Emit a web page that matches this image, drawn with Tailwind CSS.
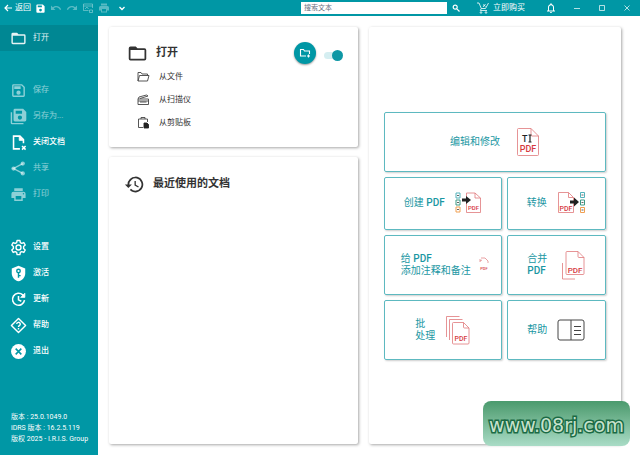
<!DOCTYPE html>
<html lang="zh-CN">
<head>
  <meta charset="UTF-8">
  <meta name="viewport" content="width=device-width, initial-scale=1.0">
  <title>打开</title>
  <script src="https://cdn.jsdelivr.net/npm/@tailwindcss/browser@4"></script>
</head>
<body class="min-h-screen flex flex-col bg-white text-[8px] text-[#333] font-['Roboto','Noto_Sans_CJK_SC',sans-serif]">

  <!-- Title bar -->
  <header class="h-4 shrink-0 flex items-center bg-[#0097a5] text-white">
    <div class="flex-1 flex items-center pl-1">
      <button class="flex items-center gap-[3px] leading-4">
        <svg class="w-2 h-2" viewBox="0 0 8 8" fill="none" stroke="currentColor" stroke-width="1.2"><path d="M8 4H1M4 1L1 4l3 3"/></svg>
        返回
      </button>
      <button class="ml-1" aria-label="保存">
        <svg class="w-[11px] h-[11px]" viewBox="0 0 24 24" fill="currentColor"><path d="M17 3H5a2 2 0 0 0-2 2v14a2 2 0 0 0 2 2h14a2 2 0 0 0 2-2V7zM12 18.500a3 3 0 1 1 0-6 3 3 0 0 1 0 6zM15 9H6V5.500h9z"/></svg>
      </button>
      <button class="ml-1 text-white/35" disabled aria-label="撤销">
        <svg class="w-3 h-3" viewBox="0 0 24 24" fill="currentColor"><path d="M12.5 8c-2.600 0-5 1-6.900 2.600L2 7v9h9l-3.600-3.600A8 8 0 0 1 20 16l2.400-.8A10.500 10.500 0 0 0 12.500 8z"/></svg>
      </button>
      <button class="ml-1 text-white/35" disabled aria-label="重做">
        <svg class="w-3 h-3" viewBox="0 0 24 24" fill="currentColor"><path d="M11.500 8c2.600 0 5 1 6.900 2.600L22 7v9h-9l3.600-3.600A8 8 0 0 0 4 16l-2.400-.8A10.500 10.500 0 0 1 11.500 8z"/></svg>
      </button>
      <button class="ml-1 text-white/35" disabled aria-label="图像">
        <svg class="w-3 h-3" viewBox="0 0 24 24" fill="none" stroke="currentColor" stroke-width="2"><path d="M13 17H3V4h18v8M3 8h18M6 14l4-4 3 4M15 16h6v5h-6z"/></svg>
      </button>
      <button class="ml-1 text-white/35" disabled aria-label="打印">
        <svg class="w-3 h-3" viewBox="0 0 24 24" fill="currentColor"><path d="M19 8H5a3 3 0 0 0-3 3v6h4v4h12v-4h4v-6a3 3 0 0 0-3-3zm-3 11H8v-5h8zM18 3H6v4h12z"/></svg>
      </button>
      <button class="ml-2" aria-label="更多">
        <svg class="w-2 h-2" viewBox="0 0 8 8" fill="none" stroke="currentColor" stroke-width="1.300"><path d="M1.500 3L4 5.500 6.500 3"/></svg>
      </button>
    </div>
    <input type="text" aria-label="搜索文本" placeholder="搜索文本" class="w-[146px] h-3 bg-white px-[3px] text-[7px] leading-3 text-gray-700 placeholder:text-gray-500">
    <div class="w-[193px] flex items-center pl-[5px]">
      <button aria-label="搜索">
        <svg class="w-2 h-2" viewBox="0 0 8 8" fill="none" stroke="currentColor" stroke-width="1.200"><circle cx="3.200" cy="3.200" r="2"/><path d="M4.800 4.800L7.500 7.500"/></svg>
      </button>
      <button class="ml-[17px] flex items-center gap-1 leading-4">
        <svg class="w-3 h-3" viewBox="0 0 12 12" fill="none" stroke="currentColor" stroke-width=".8"><path d="M0 1h2l2.300 5.500-1 2H10M4.300 6.500h4.200l3-5.500M6 2.500l2.500 2M8.500 2L6 5"/><circle cx="4" cy="10.500" r=".8"/><circle cx="9" cy="10.500" r=".8"/></svg>
        立即购买
      </button>
      <button class="ml-5" aria-label="通知">
        <svg class="w-3 h-3" viewBox="0 0 24 24" fill="currentColor"><path d="M12 22a2 2 0 0 0 2-2h-4c0 1.100.9 2 2 2zm6-6v-5c0-3.100-1.600-5.600-4.500-6.300V4a1.500 1.500 0 0 0-3 0v.7C7.600 5.400 6 7.900 6 11v5l-2 2v1h16v-1zm-2 1H8v-6c0-2.500 1.500-4.500 4-4.500s4 2 4 4.500z"/></svg>
      </button>
      <button class="ml-4" aria-label="最小化">
        <svg class="w-2 h-2" viewBox="0 0 8 8" stroke="currentColor" stroke-width=".7"><path d="M1 4.500h6"/></svg>
      </button>
      <button class="ml-[17px]" aria-label="最大化">
        <svg class="w-2 h-2" viewBox="0 0 8 8" fill="none" stroke="currentColor" stroke-width=".7"><path d="M1.500 1.500h5v5h-5z"/></svg>
      </button>
      <button class="ml-[17px]" aria-label="关闭">
        <svg class="w-2 h-2" viewBox="0 0 8 8" stroke="currentColor" stroke-width=".7"><path d="M1.500 1.500l5 5M6.500 1.500l-5 5"/></svg>
      </button>
    </div>
  </header>

  <div class="flex-1 flex">
    <!-- Sidebar -->
    <aside class="w-[98px] shrink-0 flex flex-col bg-[#0097a5] text-white pt-[9px] pb-[10px]">
      <nav class="flex flex-col">
        <button class="h-[26px] flex items-center gap-[6px] pl-[10px] bg-[#008793] text-white/90">
          <svg class="w-[17px] h-[17px]" viewBox="0 0 24 24" fill="currentColor"><path d="M20 6h-8l-2-2H4a2 2 0 0 0-2 2v12a2 2 0 0 0 2 2h16a2 2 0 0 0 2-2V8a2 2 0 0 0-2-2zm0 12H4V8h16z"/></svg>
          打开
        </button>

        <button disabled class="mt-[26px] h-[26px] flex items-center gap-[6px] pl-[10px] text-white/55">
          <svg class="w-[17px] h-[17px]" viewBox="0 0 24 24" fill="currentColor"><path d="M17 3H5a2 2 0 0 0-2 2v14a2 2 0 0 0 2 2h14a2 2 0 0 0 2-2V7zm2 16H5V5h11.200L19 7.800zM12 12a3 3 0 1 0 0 6 3 3 0 0 0 0-6zM6 6h9v4H6z"/></svg>
          保存
        </button>
        <button disabled class="h-[26px] flex items-center gap-[6px] pl-[10px] text-white/55">
          <svg class="w-[17px] h-[17px]" viewBox="0 0 24 24" fill="currentColor"><path d="M18.500 1H7a2 2 0 0 0-2 2v14a2 2 0 0 0 2 2h14a2 2 0 0 0 2-2V5.500zM14 16.500a3 3 0 1 1 0-6 3 3 0 0 1 0 6zM17 8H8V4h9z"/><path d="M1 6h2v15h16v2H3a2 2 0 0 1-2-2z"/></svg>
          另存为...
        </button>
        <button class="h-[26px] flex items-center gap-[6px] pl-[10px] font-medium">
          <svg class="w-[17px] h-[17px]" viewBox="0 0 24 24" fill="none" stroke="currentColor" stroke-width="2.200"><path d="M14 21H5V3h9l5 5v5"/><path d="M13 3v6h6z" fill="currentColor" stroke-width="1"/><path d="M17 17l5 5M22 17l-5 5"/></svg>
          关闭文档
        </button>
        <button disabled class="h-[26px] flex items-center gap-[6px] pl-[10px] text-white/55">
          <svg class="w-[17px] h-[17px]" viewBox="0 0 24 24" fill="currentColor"><circle cx="18" cy="5" r="3"/><circle cx="5" cy="12" r="3"/><circle cx="18" cy="19" r="3"/><path d="M18 5L5 12l13 7" fill="none" stroke="currentColor" stroke-width="2"/></svg>
          共享
        </button>
        <button disabled class="h-[26px] flex items-center gap-[6px] pl-[10px] text-white/55">
          <svg class="w-[17px] h-[17px]" viewBox="0 0 24 24" fill="currentColor"><path d="M19 8H5a3 3 0 0 0-3 3v6h4v4h12v-4h4v-6a3 3 0 0 0-3-3zm-3 11H8v-5h8zm3-7a1 1 0 1 1 0-2 1 1 0 0 1 0 2zM18 3H6v4h12z"/></svg>
          打印
        </button>

        <button class="mt-[27px] h-[26px] flex items-center gap-[6px] pl-[10px] font-medium">
          <svg class="w-[17px] h-[17px]" viewBox="0 0 24 24" fill="none" stroke="currentColor" stroke-width="2" stroke-linejoin="round"><path d="M10 2h4l.6 3 2 1.200L19.500 5l2 3.500-2.300 2v3l2.300 2-2 3.500-2.900-1.200-2 1.200-.6 3h-4l-.6-3-2-1.200L4.500 19l-2-3.500 2.300-2v-3l-2.300-2L4.500 5l2.900 1.200 2-1.200z"/><circle cx="12" cy="12" r="3.500"/></svg>
          设置
        </button>
        <button class="h-[26px] flex items-center gap-[6px] pl-[10px] font-medium">
          <svg class="w-[17px] h-[17px]" viewBox="0 0 24 24" fill="currentColor"><path d="M12 1L2.500 5v6.500c0 5.500 4 10 9.500 11.500 5.500-1.500 9.500-6 9.500-11.500V5z"/><g fill="none" stroke="#0097a5" stroke-width="2"><circle cx="12" cy="8.500" r="2.500"/><path d="M12 11v7M12 15h3"/></g></svg>
          激活
        </button>
        <button class="h-[26px] flex items-center gap-[6px] pl-[10px] font-medium">
          <svg class="w-[17px] h-[17px]" viewBox="0 0 24 24" fill="none" stroke="currentColor" stroke-width="2.200"><path d="M20.500 13a8.500 8.500 0 1 1-2.500-7.500L20 8M12 7v5.500l4 2"/><path d="M21 3v6h-6z" fill="currentColor" stroke-width="1"/></svg>
          更新
        </button>
        <button class="h-[26px] flex items-center gap-[6px] pl-[10px] font-medium">
          <svg class="w-[17px] h-[17px]" viewBox="0 0 24 24" fill="none" stroke="currentColor" stroke-width="2" stroke-linejoin="round"><path d="M12 2l10 10-10 10L2 12z"/><path d="M9.500 10a2.500 2.500 0 1 1 3.700 2.200c-.8.500-1.200.9-1.200 1.800M12 15.500v2"/></svg>
          帮助
        </button>
        <button class="h-[26px] flex items-center gap-[6px] pl-[10px] font-medium">
          <svg class="w-[17px] h-[17px]" viewBox="0 0 24 24"><circle cx="12" cy="12" r="10.500" fill="currentColor"/><path d="M8 8l8 8M16 8l-8 8" stroke="#0097a5" stroke-width="2.200"/></svg>
          退出
        </button>
      </nav>
      <div class="mt-auto pl-[11px] text-[7px] leading-[11px]">
        <p>版本 : 25.0.1049.0</p>
        <p>iDRS 版本 : 16.2.5.119</p>
        <p>版权 2025 - I.R.I.S. Group</p>
      </div>
    </aside>

    <main class="flex-1 grid grid-cols-[249fr_252fr] gap-[11px] pl-[11px] pr-[19px] py-[11px]">
      <div class="flex flex-col gap-[10px]">
        <!-- Open -->
        <section class="rounded-xs bg-white shadow-[1px_1px_3px_rgba(0,0,0,0.35)] pt-[14px] pb-[13px] pl-[18px] pr-[15px]">
          <div class="h-6 flex items-center">
            <svg class="w-[21px] h-[21px]" viewBox="0 0 24 24" fill="currentColor"><path d="M20 6h-8l-2-2H4a2 2 0 0 0-2 2v12a2 2 0 0 0 2 2h16a2 2 0 0 0 2-2V8a2 2 0 0 0-2-2zm0 12H4V8h16z"/></svg>
            <h2 class="ml-2 text-[11px] leading-4 font-bold">打开</h2>
            <button class="ml-auto w-[22px] h-[22px] rounded-full bg-[#0097a5] text-white flex items-center justify-center shadow-[0_1px_2px_rgba(0,0,0,0.4)]" aria-label="打开文件夹">
              <svg class="w-3 h-3" viewBox="0 0 24 24" fill="none" stroke="currentColor" stroke-width="2.200"><path d="M14 18H3V5h6l2 3h10v6"/><path d="M19 15v6M16 18h6"/></svg>
            </button>
            <input type="checkbox" role="switch" checked aria-label="切换视图" class="ml-2 mt-1 appearance-none w-[19px] h-[11px] relative before:absolute before:left-0 before:top-[2px] before:w-4 before:h-[7px] before:rounded-full before:bg-[#d5eef1] after:absolute after:right-0 after:top-0 after:w-[11px] after:h-[11px] after:rounded-full after:bg-[#0e97a5]">
          </div>
          <div class="flex flex-col pl-[9px]">
            <button class="h-[23px] flex items-center gap-[9px]">
              <svg class="w-[14px] h-[14px]" viewBox="0 0 14 14" fill="none" stroke="#444" stroke-width=".9"><path d="M2 11V2.500h3l1 1.500h5.500v1.500M2 11l1.500-5.500H13L11.500 11z"/></svg>
              从文件
            </button>
            <button class="h-[23px] flex items-center gap-[9px]">
              <svg class="w-[14px] h-[14px]" viewBox="0 0 14 14" fill="none" stroke="#444" stroke-width=".9"><path d="M2 6h10.500v5.500H2zM2 6l1-2 7.500-2 1.500 1-8 2.500M4 9h6.500M2 8h10.500"/></svg>
              从扫描仪
            </button>
            <button class="h-[23px] flex items-center gap-[9px]">
              <svg class="w-[14px] h-[14px]" viewBox="0 0 14 14" fill="none" stroke="#444" stroke-width=".9"><path d="M7 11.500H2.500V3h9v3M5 3V1.500h4V3"/><path d="M8 7h3l1.500 1.500V12H8z" fill="#222" stroke="#222"/></svg>
              从剪贴板
            </button>
          </div>
        </section>

        <!-- Recent documents -->
        <section class="flex-1 rounded-xs bg-white shadow-[1px_1px_3px_rgba(0,0,0,0.35)] pt-[17px] px-[15px]">
          <div class="h-5 flex items-center gap-2">
            <svg class="w-[21px] h-[21px]" viewBox="0 0 24 24" fill="currentColor"><path d="M13 3a9 9 0 0 0-9 9H1l4 4 4-4H6a7 7 0 1 1 2 4.900L6.600 18.300A9 9 0 1 0 13 3zm-1 5v5l4.200 2.500.8-1.200-3.500-2.100V8z"/></svg>
            <h2 class="text-[11px] leading-4 font-bold">最近使用的文档</h2>
          </div>
        </section>
      </div>

      <!-- Tools -->
      <section class="rounded-xs bg-white shadow-[1px_1px_3px_rgba(0,0,0,0.35)] px-[15px] flex flex-col justify-center">
        <div class="grid grid-cols-[117fr_99fr] grid-rows-[60px_53px_60px_60px] gap-[5px] text-[10px] leading-[12px] text-[#1b97a3]">
          <button class="col-span-2 border border-[#5db9c0] rounded-xs shadow-[1px_1px_2px_rgba(0,0,0,0.2)] flex items-center justify-center gap-4">
            编辑和修改
            <svg class="w-6 h-[30px]" viewBox="0 0 24 30"><path d="M2.500 1.500H15L22.500 9v18.500a1 1 0 0 1-1 1h-19a1 1 0 0 1-1-1v-25a1 1 0 0 1 1-1zM15 1.500V8a1 1 0 0 0 1 1h6.500" fill="none" stroke="#e0787b" stroke-width=".8"/><text x="6" y="15" font-size="9" font-weight="500" fill="#222">T</text><path d="M12.500 8h3M14 8v7M12.500 15h3" stroke="#222" stroke-width="1.200"/><text x="12" y="25" font-size="9" font-weight="500" text-anchor="middle" fill="#d63a3f">PDF</text></svg>
          </button>
          <button class="border border-[#5db9c0] rounded-xs shadow-[1px_1px_2px_rgba(0,0,0,0.2)] flex items-center justify-center gap-[10px]">
            <span>创建 <span class="font-medium">PDF</span></span>
            <svg class="w-[27px] h-6" viewBox="0 0 27 24"><g fill="none"><path d="M1 2h4v5H1z" stroke="#54b3bc"/><path d="M1 9h4v5H1z" stroke="#3c9a86"/><path d="M1 16h4v5H1z" stroke="#f0a052"/><path d="M2 4.500h2M2 11.500h2M2 18.500h2" stroke="#666"/><path d="M11.500 2H20l5.500 5v14.500h-14zM20 2v5h5.500" stroke="#e0787b" stroke-width=".8"/></g><path d="M7 7.500h4V5l5 4-5 4v-2.500H7z" fill="#222"/><text x="18.500" y="19" font-size="6" font-weight="500" text-anchor="middle" fill="#d63a3f">PDF</text></svg>
          </button>
          <button class="border border-[#5db9c0] rounded-xs shadow-[1px_1px_2px_rgba(0,0,0,0.2)] flex items-center justify-center gap-[10px]">
            转换
            <svg class="w-[29px] h-6" viewBox="0 0 29 24"><g fill="none"><path d="M1.500 1.500h10l5 5v15h-15zM11.500 1.500v5h5" stroke="#e0787b" stroke-width=".8"/><path d="M23.500 1.500h4v5h-4z" stroke="#54b3bc"/><path d="M23.500 9h4v5h-4z" stroke="#3c9a86"/><path d="M23.500 16.500h4v5h-4z" stroke="#f0a052"/><path d="M24.500 4h2M24.500 11.500h2M24.500 19h2" stroke="#666"/></g><path d="M13 9.500h4V6.500l5 4.500-5 4.500v-3h-4z" fill="#222"/><text x="9" y="19.500" font-size="7" font-weight="500" text-anchor="middle" fill="#d63a3f">PDF</text></svg>
          </button>
          <button class="border border-[#5db9c0] rounded-xs shadow-[1px_1px_2px_rgba(0,0,0,0.2)] flex items-center justify-center gap-2 pl-1 text-left">
            <span>给 <span class="font-medium">PDF</span><br><span class="whitespace-nowrap">添加注释和备注</span></span>
            <svg class="w-[10px] h-4 shrink-0" viewBox="0 0 10 16"><path d="M1 5V2M2 1h4l3 3v2M1 4l2-1" fill="none" stroke="#e0787b" stroke-width=".7"/><text x="5" y="13" font-size="4" font-weight="500" text-anchor="middle" fill="#d63a3f">PDF</text></svg>
          </button>
          <button class="border border-[#5db9c0] rounded-xs shadow-[1px_1px_2px_rgba(0,0,0,0.2)] flex items-center justify-center gap-[14px] text-left">
            <span>合并<br><span class="font-medium">PDF</span></span>
            <svg class="w-6 h-[30px]" viewBox="0 0 24 30"><path d="M6 1.500h11l6 6v16a1 1 0 0 1-1 1H6a1 1 0 0 1-1-1v-21a1 1 0 0 1 1-1zM17 1.500v5a1 1 0 0 0 1 1h5M1.500 13v16H14" fill="none" stroke="#e0787b" stroke-width=".8"/><text x="14" y="23" font-size="8" font-weight="500" text-anchor="middle" fill="#d63a3f">PDF</text></svg>
          </button>
          <button class="border border-[#5db9c0] rounded-xs shadow-[1px_1px_2px_rgba(0,0,0,0.2)] flex items-center justify-center gap-[10px] text-left">
            <span>批<br>处理</span>
            <svg class="w-[25px] h-[30px]" viewBox="0 0 25 30"><path d="M8.500 7.500h10l5.500 5.500v15a1 1 0 0 1-1 1H8.500a1 1 0 0 1-1-1v-19.500a1 1 0 0 1 1-1zM18.500 7.500V12a1 1 0 0 0 1 1H24M4.500 25V4.500h13M1.500 22v-20.500h13" fill="none" stroke="#e0787b" stroke-width=".8"/><text x="16" y="26" font-size="7" font-weight="500" text-anchor="middle" fill="#d63a3f">PDF</text></svg>
          </button>
          <button class="border border-[#5db9c0] rounded-xs shadow-[1px_1px_2px_rgba(0,0,0,0.2)] flex items-center justify-center gap-[10px]">
            帮助
            <svg class="w-7 h-[22px]" viewBox="0 0 28 22" fill="none" stroke="#444"><rect x="1" y="1" width="26" height="20" rx="2"/><path d="M14 1v20M17 7.500h7M17 11.500h7M17 15.500h7"/></svg>
          </button>
        </div>
      </section>
    </main>
  </div>

  <!-- Site badge -->
  <div class="absolute right-[10px] bottom-[9px] w-[147px] h-[45px] rounded-lg bg-linear-to-b from-[#4a9a6d] to-[#a9dcc6] flex items-center justify-center pt-1 text-[19px] text-[#c8e2cd] font-['DejaVu_Sans',sans-serif] [-webkit-text-stroke:3px_#1b6b45] [paint-order:stroke_fill]">www.08rj.com</div>
</body>
</html>
